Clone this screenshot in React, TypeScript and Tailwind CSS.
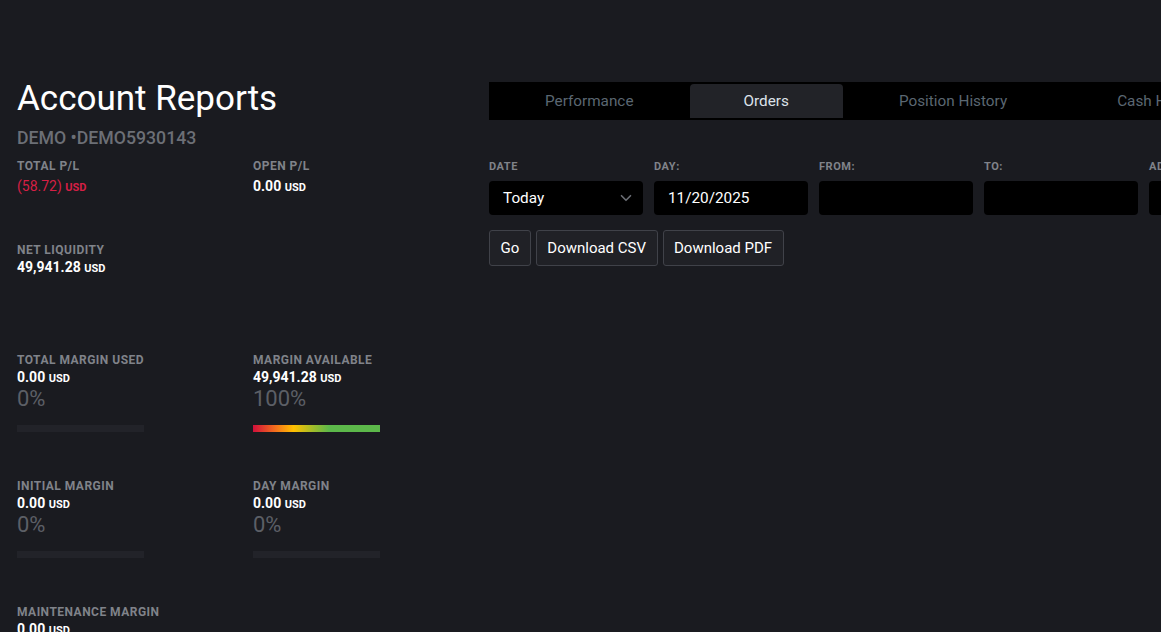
import React from "react";

const TABS = ["Performance", "Orders", "Position History", "Cash History", "Statements"];

function Usd() {
  return <span className="text-[11px] font-bold">USD</span>;
}

type Stat = {
  label: string;
  value: string;
  pct?: string;
  bar?: "empty" | "full";
  red?: boolean;
};

function StatBlock({ stat, height, first }: { stat: Stat; height: string; first?: boolean }) {
  return (
    <div className={`flex flex-col ${height}`}>
      <div className="text-[12px] font-bold leading-[14px] tracking-[0.04em] text-[#80838a]">
        {stat.label}
      </div>
      <div
        className={`${first ? "mt-[5px]" : "mt-[2px]"} text-[14px] leading-[16px] ${
          stat.red ? "font-normal text-[#d61f45]" : "font-bold text-white"
        }`}
      >
        {stat.value} <Usd />
      </div>
      {stat.pct && (
        <div className="text-[22px] leading-[24px] text-[#5c5f66]">{stat.pct}</div>
      )}
      {stat.bar && (
        <div
          className={`mt-[14px] h-[7px] w-[127px] ${
            stat.bar === "full"
              ? "bg-[linear-gradient(to_right,#d10f3b_0%,#f4711c_18%,#ffc000_32%,#9cbc2c_48%,#5cb84a_60%,#5cb84a_100%)]"
              : "bg-[#222329]"
          }`}
        />
      )}
    </div>
  );
}

export default function App() {
  const rows: { items: Stat[]; height: string }[] = [
    {
      height: "h-[84px]",
      items: [
        { label: "TOTAL P/L", value: "(58.72)", red: true },
        { label: "OPEN P/L", value: "0.00" },
      ],
    },
    {
      height: "h-[110px]",
      items: [{ label: "NET LIQUIDITY", value: "49,941.28" }],
    },
    {
      height: "h-[126px]",
      items: [
        { label: "TOTAL MARGIN USED", value: "0.00", pct: "0%", bar: "empty" },
        { label: "MARGIN AVAILABLE", value: "49,941.28", pct: "100%", bar: "full" },
      ],
    },
    {
      height: "h-[126px]",
      items: [
        { label: "INITIAL MARGIN", value: "0.00", pct: "0%", bar: "empty" },
        { label: "DAY MARGIN", value: "0.00", pct: "0%", bar: "empty" },
      ],
    },
    {
      height: "h-[126px]",
      items: [{ label: "MAINTENANCE MARGIN", value: "0.00", pct: "0%", bar: "empty" }],
    },
  ];

  const fields = ["DATE", "DAY:", "FROM:", "TO:", "ADVANCED:"];

  return (
    <div
      className="flex h-screen overflow-hidden bg-[#1a1b20]"
      style={{ fontFamily: "Roboto, 'Noto Sans', sans-serif" }}
    >
      {/* left summary */}
      <div className="w-[489px] shrink-0 pl-[17px] pt-[77px]">
        <h1 className="text-[35px] leading-[44px] font-normal text-white">Account Reports</h1>
        <div className="mt-[5px] text-[17.7px] leading-[24px] font-medium text-[#6c6f76]">
          DEMO •DEMO5930143
        </div>
        <div className="mt-[9px]">
          {rows.map((row, i) => (
            <div key={i} className="grid grid-cols-[236px_236px]">
              {row.items.map((s) => (
                <StatBlock key={s.label} stat={s} height={row.height} first={i === 0} />
              ))}
            </div>
          ))}
        </div>
      </div>

      {/* right reports */}
      <div className="min-w-0 flex-1 pt-[82px]">
        <div className="flex w-max gap-[2px] bg-black p-[2px]">
          {TABS.map((t) => (
            <div
              key={t}
              className={`flex h-[34px] items-center rounded-t-[4px] px-[54px] text-[15.3px] ${
                t === "Orders" ? "bg-[#222328] text-[#dde2ea]" : "text-[#5b6772]"
              }`}
            >
              {t}
            </div>
          ))}
        </div>

        <div className="mt-[40px] flex gap-[11px]">
          {fields.map((f, i) => (
            <div key={f} className="flex w-[154px] shrink-0 flex-col">
              <div className="text-[11px] font-bold leading-[13px] tracking-[0.05em] text-[#80838a]">
                {f}
              </div>
              <div className="mt-[8px] flex h-[34px] items-center justify-between rounded-[4px] bg-black pl-[14px] pr-[8px] text-[15.3px] text-white">
                {i === 0 && (
                  <>
                    <span>Today</span>
                    <svg width="18" height="18" viewBox="0 0 24 24" fill="none" stroke="#6b6e75" strokeWidth="2.2" strokeLinecap="round" strokeLinejoin="round">
                      <path d="M6 9l6 6 6-6" />
                    </svg>
                  </>
                )}
                {i === 1 && <span>11/20/2025</span>}
              </div>
            </div>
          ))}
        </div>

        <div className="mt-[15px] flex gap-[5px]">
          {["Go", "Download CSV", "Download PDF"].map((b) => (
            <button
              key={b}
              type="button"
              className="h-[36px] rounded-[3px] border border-[#404249] bg-[#202126] px-[10.5px] text-[15px] text-white"
            >
              {b}
            </button>
          ))}
        </div>
      </div>
    </div>
  );
}
